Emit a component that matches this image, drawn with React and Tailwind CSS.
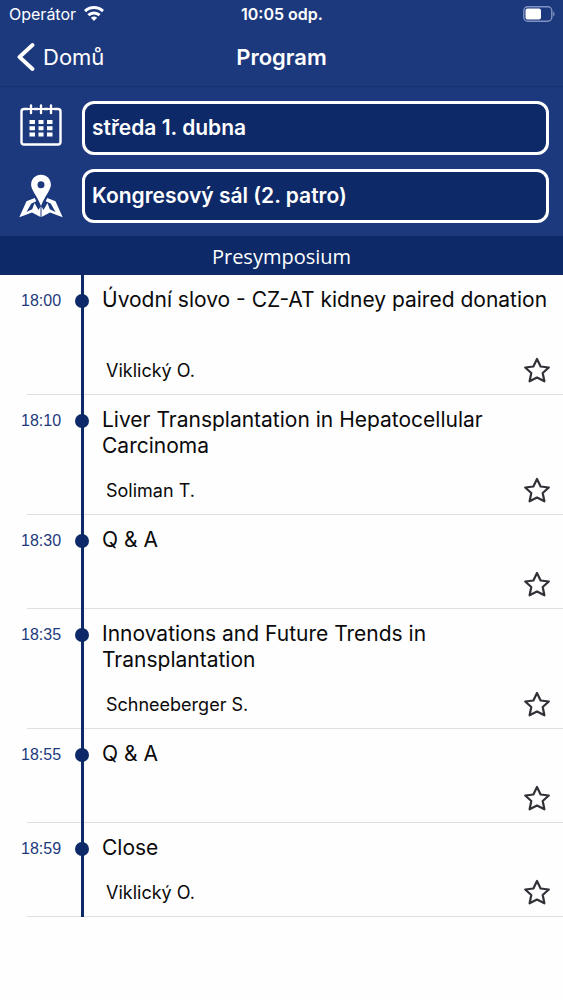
const days = ['středa 1. dubna', 'čtvrtek 2. dubna', 'pátek 3. dubna']
const halls = ['Kongresový sál (2. patro)', 'Malý sál (1. patro)']

const talks = [
  { time: '18:00', title: 'Úvodní slovo - CZ-AT kidney paired donation', speaker: 'Viklický O.', tall: true },
  { time: '18:10', title: 'Liver Transplantation in Hepatocellular Carcinoma', speaker: 'Soliman T.', tall: true },
  { time: '18:30', title: 'Q & A', speaker: '' },
  { time: '18:35', title: 'Innovations and Future Trends in Transplantation', speaker: 'Schneeberger S.', tall: true },
  { time: '18:55', title: 'Q & A', speaker: '' },
  { time: '18:59', title: 'Close', speaker: 'Viklický O.' },
]

function WifiIcon() {
  return (
    <svg className="h-4 w-5" viewBox="0 0 20 16" fill="none" stroke="currentColor" strokeWidth="3" aria-hidden="true">
      <path d="M1 5.100C6 .3 14 .3 19 5.100" />
      <path d="M4.400 9.200c3.200-3 8-3 11.200 0" />
      <path d="M10 15l-3.100-3.300c1.700-1.500 4.500-1.500 6.200 0z" fill="currentColor" stroke="none" />
    </svg>
  )
}

function BatteryIcon() {
  return (
    <svg className="h-4 w-8" viewBox="0 0 32 16" fill="none" aria-label="Baterie">
      <rect x=".8" y=".8" width="28" height="14.400" rx="4" stroke="#8093c2" strokeWidth="1.400" />
      <rect x="2.500" y="2.600" width="15.500" height="10.800" rx="2" fill="white" />
      <path d="M30.200 5.500c1.800.8 1.800 4.200 0 5z" fill="#8093c2" />
    </svg>
  )
}

function CalendarIcon() {
  return (
    <svg className="h-12 w-[42px] text-white" viewBox="0 0 42 48" fill="none" stroke="currentColor" strokeWidth="2.400" aria-hidden="true">
      <rect x="1.500" y="5" width="39" height="35.500" rx="2.500" />
      <path d="M11 1v9M21 1v9M31 1v9" stroke="#1d397d" strokeWidth="6" />
      <path d="M7 5h8M17 5h8M27 5h8" strokeWidth="2.200" />
      <path d="M11 1.500v7.500M21 1.500v7.500M31 1.500v7.500" strokeLinecap="round" />
      <path d="M9.500 18h5.500M18.500 18h5M27 18h5.500M9.500 24.200h5.500M18.500 24.200h5M27 24.200h5.500M9.500 30.400h5.500M18.500 30.400h5M27 30.400h5.500" strokeWidth="4" />
    </svg>
  )
}

function MapPinIcon() {
  return (
    <svg className="h-11 w-11 text-white" viewBox="0 0 44 44" fill="currentColor" aria-hidden="true">
      <path fillRule="evenodd" d="M22 .8c5.700 0 9.900 4.300 9.900 9.900C31.900 16 26 21.500 22 32c-4-10.500-9.900-16-9.900-21.300C12.100 5.100 16.300.8 22 .8zm0 6.500a3.500 3.500 0 1 0 0 7 3.500 3.500 0 0 0 0-7z" />
      <path d="M15.700 24l1.600 3.300-5 2.100L7.500 38l5.700-2.700L15.500 29l4 7 2-3.500V43l-8.500-4.500L.3 43.300 7.500 27.300z" />
      <path d="M28.300 24l-1.600 3.300 5 2.100L36.500 38l-5.700-2.700L28.500 29l-4 7-2-3.500V43l8.500-4.500 12.700 4.800L36.500 27.300z" />
    </svg>
  )
}

function StarIcon() {
  return (
    <svg className="h-7 w-7" viewBox="0 0 28 28" fill="none" stroke="#303238" strokeWidth="2.200" strokeLinejoin="round" aria-hidden="true">
      <path d="M14 2l3.600 7.500 8.200 1-6.100 5.500 1.700 8.300L14 20.500l-7.400 3.800L8.300 16 2.200 10.500l8.200-1z" />
    </svg>
  )
}

function Picker({ id, label, icon, options }) {
  return (
    <div className="flex items-center">
      <label htmlFor={id} aria-label={label} className="flex w-[82px] shrink-0 justify-center">
        {icon}
      </label>
      <select
        id={id}
        className="h-[54px] min-w-0 flex-1 appearance-none rounded-xl border-3 border-white bg-[#0d2967] px-[7px] text-[21px] font-semibold text-white"
      >
        {options.map((option) => (
          <option key={option}>{option}</option>
        ))}
      </select>
    </div>
  )
}

function Talk({ time, title, speaker, tall }) {
  return (
    <li className="ml-[27px] flex border-b border-[#dedfe3]">
      <div className="-ml-[6px] w-[61px] shrink-0">
        <time className="block pt-[14px] font-['Liberation_Sans',sans-serif] text-base leading-6 text-[#1f397d]">{time}</time>
      </div>
      <div className="-mb-px -ml-2 flex w-4 shrink-0 justify-center bg-[linear-gradient(#0d2967,#0d2967)] bg-[length:3px_100%] bg-center bg-no-repeat pt-[19px]">
        <span className="size-[14px] rounded-full bg-[#0d2967]" />
      </div>
      <div className="flex min-w-0 flex-1 flex-col pt-3 pb-2 pl-3">
        <h2 className={`${tall ? 'min-h-[52px]' : 'min-h-[26px]'} pr-2 text-[21px] leading-[26px] text-[#0a0a0a]`}>{title}</h2>
        <div className="mt-[17px] flex h-[30px] items-center justify-between pr-3 pl-1">
          <p className="text-lg text-[#0a0a0a]">{speaker}</p>
          <button type="button" aria-label={`Přidat k oblíbeným: ${title}`}>
            <StarIcon />
          </button>
        </div>
      </div>
    </li>
  )
}

export default function App() {
  return (
    <div className="min-h-screen bg-[#fefefe] font-[Inter,sans-serif]">
      <header className="border-b border-[#16306f] bg-[#1d397d] text-white">
        <div className="grid h-7 grid-cols-3 items-center pr-2 pl-[9px] text-base">
          <div className="flex items-center gap-2">
            <span>Operátor</span>
            <WifiIcon />
          </div>
          <span className="text-center font-semibold">10:05 odp.</span>
          <div className="flex justify-end">
            <BatteryIcon />
          </div>
        </div>
        <nav className="grid h-[58px] grid-cols-3 items-center px-4 text-[22px]">
          <a href="#domu" className="flex items-center gap-2">
            <svg className="h-8 w-[19px]" viewBox="0 0 19 32" fill="none" stroke="currentColor" strokeWidth="3.800" strokeLinecap="round" strokeLinejoin="round" aria-hidden="true">
              <path d="M16.500 4L3.500 16l13 12" />
            </svg>
            Domů
          </a>
          <h1 className="text-center font-semibold">Program</h1>
        </nav>
      </header>
      <main>
        <form className="flex flex-col gap-[14px] bg-[#1d397d] pt-[14px] pr-[14px] pb-[13px]">
          <Picker id="day" label="Den" icon={<CalendarIcon />} options={days} />
          <Picker id="hall" label="Sál" icon={<MapPinIcon />} options={halls} />
        </form>
        <h2 className="bg-[#0d2967] pt-[7px] pb-[5px] text-center font-['Open_Sans',sans-serif] text-xl leading-[27px] text-white">
          Presymposium
        </h2>
        <ol>
          {talks.map((talk) => (
            <Talk key={talk.time} {...talk} />
          ))}
        </ol>
      </main>
    </div>
  )
}
